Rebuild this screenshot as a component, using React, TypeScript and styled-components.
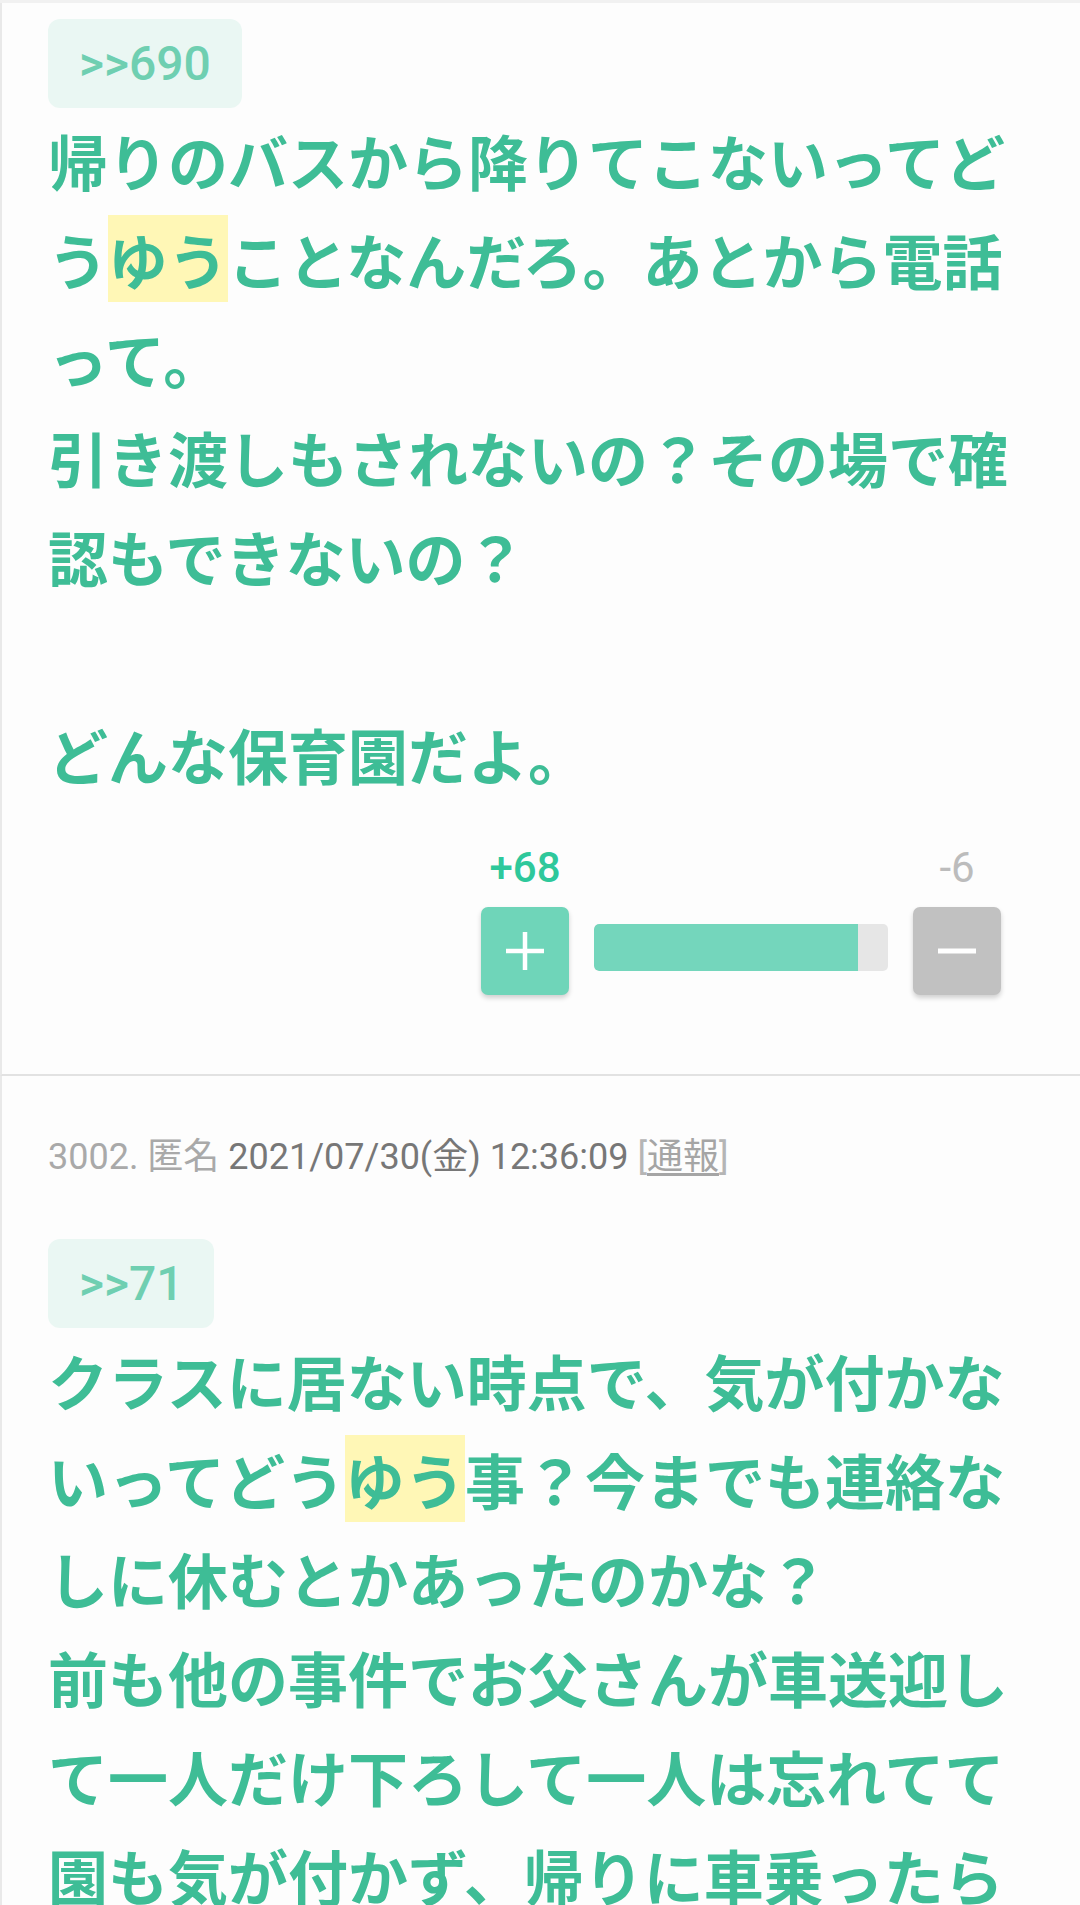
import React from "react";
import styled, { createGlobalStyle } from "styled-components";

const GlobalStyle = createGlobalStyle`
  html, body { margin: 0; padding: 0; background: #fdfdfd; }
  body { font-family: "Noto Sans CJK JP", "Noto Sans", sans-serif; }
`;

const Page = styled.div`
  width: 1080px;
  background: #fdfdfd;
  border-top: 3px solid #f1f1f1;
`;

const Card = styled.article<{ $first?: boolean }>`
  border-left: 2px solid #e9e9e9;
  border-bottom: 2px solid #e2e2e2;
  padding: ${(p) => (p.$first ? "16px" : "56px")} 48px 79px 46px;
`;

const Meta = styled.div`
  font-family: Roboto, "Noto Sans CJK JP", sans-serif;
  font-size: 36px;
  line-height: 50px;
  color: #a9a9a9;
  margin-bottom: 57px;
  white-space: nowrap;
`;

const MetaDate = styled.span`
  color: #777777;
`;

const Report = styled.span`
  color: #b5b5b5;
  & > u {
    color: #a5a5a5;
    text-decoration-color: #a5a5a5;
    text-underline-offset: 4px;
  }
`;

const Anchor = styled.div`
  display: inline-flex;
  align-items: center;
  height: 89px;
  padding: 0 31px;
  border-radius: 12px;
  background: #eaf7f3;
  color: #6fcfb1;
  font-family: Roboto, "Noto Sans", sans-serif;
  font-weight: 500;
  font-size: 48px;
  line-height: 1;
`;

const Body = styled.p`
  margin: 2px 0 0;
  font-family: "Noto Sans CJK JP", sans-serif;
  font-weight: 700;
  font-size: 60px;
  line-height: 99px;
  color: #3ebd96;
  white-space: nowrap;
`;

const Mark = styled.span`
  background: #fff7b6;
`;

const Votes = styled.div`
  display: grid;
  grid-template-columns: 88px 294px 88px;
  grid-template-rows: 50px 88px;
  column-gap: 25px;
  row-gap: 14px;
  justify-content: end;
  margin: 40px 31px 0 0;
`;

const Count = styled.div<{ $good?: boolean }>`
  text-align: center;
  font-family: Roboto, "Noto Sans", sans-serif;
  font-size: 42px;
  line-height: 50px;
  font-weight: ${(p) => (p.$good ? 500 : 400)};
  color: ${(p) => (p.$good ? "#2ec89b" : "#bcbcbc")};
`;

const VoteButton = styled.button<{ $good?: boolean }>`
  grid-row: 2;
  width: 88px;
  height: 88px;
  border: none;
  border-radius: 7px;
  padding: 0;
  display: flex;
  align-items: center;
  justify-content: center;
  background: ${(p) => (p.$good ? "#6fd5b9" : "#c1c1c1")};
  box-shadow: 0 3px 5px rgba(0, 0, 0, 0.18);
`;

const Bar = styled.div`
  grid-row: 2;
  grid-column: 2;
  align-self: start;
  margin-top: 17px;
  height: 47px;
  border-radius: 5px;
  background: #e6e6e6;
  overflow: hidden;
`;

const Fill = styled.div`
  height: 100%;
  background: #74d6bc;
  border-radius: 5px 0 0 5px;
`;

const PlusIcon = () => (
  <svg width="40" height="40" viewBox="0 0 40 40">
    <path d="M20 1v38M1 20h38" stroke="#fff" strokeWidth="4.5" fill="none" />
  </svg>
);

const MinusIcon = () => (
  <svg width="40" height="40" viewBox="0 0 40 40">
    <path d="M1 20h38" stroke="#fff" strokeWidth="5" fill="none" />
  </svg>
);

type VoteProps = { up: number; down: number };

const VoteBar = ({ up, down }: VoteProps) => {
  const pct = (up / (up + down)) * 100 - 2;
  return (
    <Votes>
      <Count $good>+{up}</Count>
      <div />
      <Count>-{down}</Count>
      <VoteButton $good aria-label="plus">
        <PlusIcon />
      </VoteButton>
      <Bar>
        <Fill style={{ width: `${pct}%` }} />
      </Bar>
      <VoteButton aria-label="minus">
        <MinusIcon />
      </VoteButton>
    </Votes>
  );
};

export default function App() {
  return (
    <Page>
      <GlobalStyle />
      <Card $first>
        <Anchor>&gt;&gt;690</Anchor>
        <Body>
          帰りのバスから降りてこないってど
          <br />
          う<Mark>ゆう</Mark>ことなんだろ。あとから電話
          <br />
          って。
          <br />
          引き渡しもされないの？その場で確
          <br />
          認もできないの？
          <br />
          <br />
          どんな保育園だよ。
        </Body>
        <VoteBar up={68} down={6} />
      </Card>
      <Card>
        <Meta>
          3002. 匿名 <MetaDate>2021/07/30(金) 12:36:09</MetaDate>{" "}
          <Report>
            [<u>通報</u>]
          </Report>
        </Meta>
        <Anchor>&gt;&gt;71</Anchor>
        <Body>
          クラスに居ない時点で、気が付かな
          <br />
          いってどう<Mark>ゆう</Mark>事？今までも連絡な
          <br />
          しに休むとかあったのかな？
          <br />
          前も他の事件でお父さんが車送迎し
          <br />
          て一人だけ下ろして一人は忘れてて
          <br />
          園も気が付かず、帰りに車乗ったら
        </Body>
      </Card>
    </Page>
  );
}
